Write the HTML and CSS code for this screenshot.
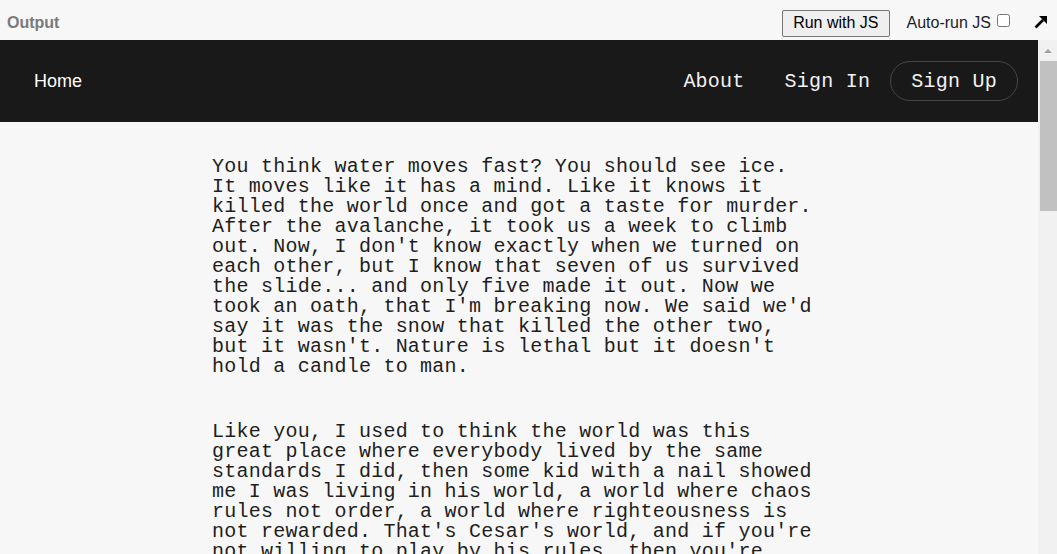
FILE: index.html
```html
<!DOCTYPE html>
<html lang="en">
<head>
<meta charset="utf-8">
<title>Output</title>
<link rel="stylesheet" href="styles.css">
</head>
<body>
<header class="toolbar">
  <span class="title">Output</span>
  <div class="tools">
    <button class="run" type="button">Run with JS</button>
    <label class="auto">Auto-run JS <input class="auto-box" type="checkbox"></label>
    <svg class="popout" width="14" height="14" viewBox="0 0 14 14" aria-hidden="true">
      <path d="M1.5 12.5 L9 5" stroke="#000" stroke-width="2.6" stroke-linecap="butt" fill="none"/>
      <path d="M5 1 L13 1 L13 9 Z" fill="#000"/>
    </svg>
  </div>
</header>
<div class="frame">
  <div class="page">
    <nav class="nav">
      <a class="home" href="#">Home</a>
      <div class="links">
        <a class="link" href="#">About</a>
        <a class="link" href="#">Sign In</a>
        <a class="signup" href="#">Sign Up</a>
      </div>
    </nav>
    <main class="story">
      <p class="para">You think water moves fast? You should see ice. It moves like it has a mind. Like it knows it killed the world once and got a taste for murder. After the avalanche, it took us a week to climb out. Now, I don't know exactly when we turned on each other, but I know that seven of us survived the slide... and only five made it out. Now we took an oath, that I'm breaking now. We said we'd say it was the snow that killed the other two, but it wasn't. Nature is lethal but it doesn't hold a candle to man.</p>
      <p class="para">Like you, I used to think the world was this great place where everybody lived by the same standards I did, then some kid with a nail showed me I was living in his world, a world where chaos rules not order, a world where righteousness is not rewarded. That's Cesar's world, and if you're not willing to play by his rules, then you're gonna have to pay the price.</p>
    </main>
  </div>
  <div class="scrollbar">
    <div class="scroll-up"></div>
    <div class="thumb"></div>
  </div>
</div>
</body>
</html>
```
FILE: styles.css
```css
html, body {
  margin: 0;
  height: 100%;
}
body {
  background: #f7f7f7;
  display: flex;
  flex-direction: column;
  overflow: hidden;
  font-family: "Liberation Sans", Arial, sans-serif;
}
.toolbar {
  height: 40px;
  flex: none;
  box-sizing: border-box;
  padding: 6px 9px 0 7px;
  display: flex;
  align-items: center;
  justify-content: space-between;
}
.title {
  font-weight: bold;
  font-size: 16px;
  color: #7a7a7a;
}
.tools {
  display: flex;
  align-items: center;
}
.run {
  font-family: "Liberation Sans", Arial, sans-serif;
  font-size: 16px;
  height: 27px;
  padding: 0 10px;
  border: 1px solid #767676;
  border-radius: 2px;
  background: #efefef;
  color: #000;
}
.auto {
  display: flex;
  align-items: center;
  margin-left: 17px;
  font-size: 16px;
  color: #1c1c2a;
}
.auto-box {
  width: 13px;
  height: 13px;
  margin: -6px 0 0 6px;
}
.popout {
  margin-left: 24px;
  margin-top: -2px;
}
.frame {
  flex: 1;
  min-height: 0;
  display: flex;
}
.page {
  flex: 1;
  overflow: hidden;
  background: #f7f7f7;
}
.nav {
  height: 82px;
  background: #191919;
  display: flex;
  align-items: center;
  padding: 0 20px;
}
.home {
  padding: 0 14px;
  font-family: "Liberation Sans", Arial, sans-serif;
  font-size: 18px;
  color: #fff;
  text-decoration: none;
}
.links {
  margin-left: auto;
  display: flex;
  align-items: center;
}
.link, .signup {
  font-family: "Liberation Mono", "DejaVu Sans Mono", monospace;
  font-size: 20px;
  letter-spacing: 0.24px;
  color: #f2f2f2;
  text-decoration: none;
  padding: 0 20px;
}
.signup {
  box-sizing: border-box;
  height: 40px;
  line-height: 40px;
  border: 1px solid #464646;
  border-radius: 20px;
}
.story {
  width: 614px;
  box-sizing: border-box;
  padding: 35px 9px 0 0;
  margin: 0 auto;
}
.para {
  margin: 0 0 45px;
  font-family: "Liberation Mono", "DejaVu Sans Mono", monospace;
  font-size: 20px;
  line-height: 20px;
  letter-spacing: 0.24px;
  color: #1e1e1e;
}
.scrollbar {
  width: 19px;
  flex: none;
  background: #f1f1f1;
  display: flex;
  flex-direction: column;
}
.scroll-up {
  width: 0;
  height: 0;
  margin: 9px auto 8px;
  border-left: 4px solid transparent;
  border-right: 4px solid transparent;
  border-bottom: 4px solid #a3a3a3;
}
.thumb {
  height: 150px;
  margin-left: 2px;
  background: #c1c1c1;
}
```
